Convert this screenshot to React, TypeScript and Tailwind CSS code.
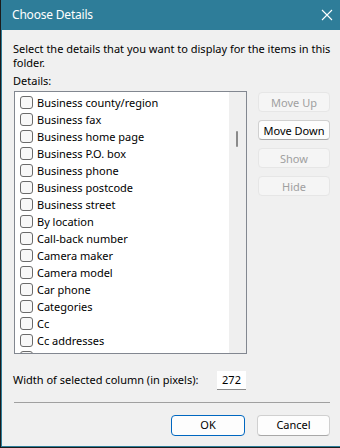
import React from "react";

const items = [
  "Business county/region",
  "Business fax",
  "Business home page",
  "Business P.O. box",
  "Business phone",
  "Business postcode",
  "Business street",
  "By location",
  "Call-back number",
  "Camera maker",
  "Camera model",
  "Car phone",
  "Categories",
  "Cc",
  "Cc addresses",
];

const font = { fontFamily: '"Segoe UI", "Noto Sans", sans-serif' };

function SideButton({ label, enabled }: { label: string; enabled?: boolean }) {
  return (
    <div
      className={
        "w-[72px] h-[20px] flex items-center justify-center rounded-[4px] border text-[11px] leading-none " +
        (enabled
          ? "bg-[#fdfdfd] border-[#d0d0d0] border-b-[#a8a8a8] text-black"
          : "bg-[#f5f5f5] border-[#e6e6e6] text-[#a0a0a0]")
      }
    >
      {label}
    </div>
  );
}

function Box() {
  return <div className="w-[13px] h-[13px] shrink-0 rounded-[3px] border border-[#6b6b6b] bg-[#f8f8f8]" />;
}

export default function App() {
  return (
    <div className="w-[340px] h-[448px] bg-[#1b1b1b] overflow-hidden" style={font}>
      <div className="ml-[1px] h-[447px] border-l border-b border-[#2e7d99] bg-[#f0f0f0] flex flex-col">
        <div className="h-[30px] bg-[#2e7d99] flex items-center justify-between pl-[10px] pr-[7px] text-white text-[12px] tracking-[-0.2px]">
          <span>Choose Details</span>
          <svg width="12" height="12" viewBox="0 0 12 12">
            <path d="M1 1 L11 11 M11 1 L1 11" stroke="white" strokeWidth="1.1" />
          </svg>
        </div>
        <div className="pl-[11px] pr-[9px] text-[11px] text-black">
          <p className="mt-[12px] leading-[14px]">
            Select the details that you want to display for the items in this folder.
          </p>
          <div className="mt-[4px] leading-[14px]">Details:</div>
          <div className="mt-[3px] flex">
            <div className="ml-[1px] w-[233px] h-[263px] border border-[#828790] bg-white flex overflow-hidden">
              <div className="flex-1 pt-[2px] pl-[5px]">
                {items.map((it) => (
                  <div key={it} className="h-[17px] flex items-center gap-[4px]">
                    <Box />
                    <span className="leading-none">{it}</span>
                  </div>
                ))}
                <div className="h-[17px] flex items-center">
                  <Box />
                </div>
              </div>
              <div className="w-[17px] bg-[#efefef] relative">
                <div className="absolute left-[7px] top-[39px] w-[2px] h-[16px] rounded-full bg-[#8a8a8a]" />
              </div>
            </div>
            <div className="ml-[11px] flex flex-col gap-[8px] pt-[1px]">
              <SideButton label="Move Up" />
              <SideButton label="Move Down" enabled />
              <SideButton label="Show" />
              <SideButton label="Hide" />
            </div>
          </div>
          <div className="mt-[17px] flex items-center">
            <span className="w-[204px]">Width of selected column (in pixels):</span>
            <div className="w-[29px] h-[19px] bg-white border-b border-[#8a8a8a] flex items-center justify-center">
              272
            </div>
          </div>
          <div className="mt-[12px] ml-[1px] mr-[1px] h-[1px] bg-[#a0a0a0]" />
          <div className="mt-[12px] flex justify-end gap-[12px] pr-[1px]">
            <div className="w-[74px] h-[21px] flex items-center justify-center rounded-[4px] border border-[#0067c0] bg-[#fdfdfd]">
              OK
            </div>
            <div className="w-[73px] h-[21px] flex items-center justify-center rounded-[4px] border border-[#d0d0d0] border-b-[#a8a8a8] bg-[#fdfdfd]">
              Cancel
            </div>
          </div>
        </div>
      </div>
    </div>
  );
}
